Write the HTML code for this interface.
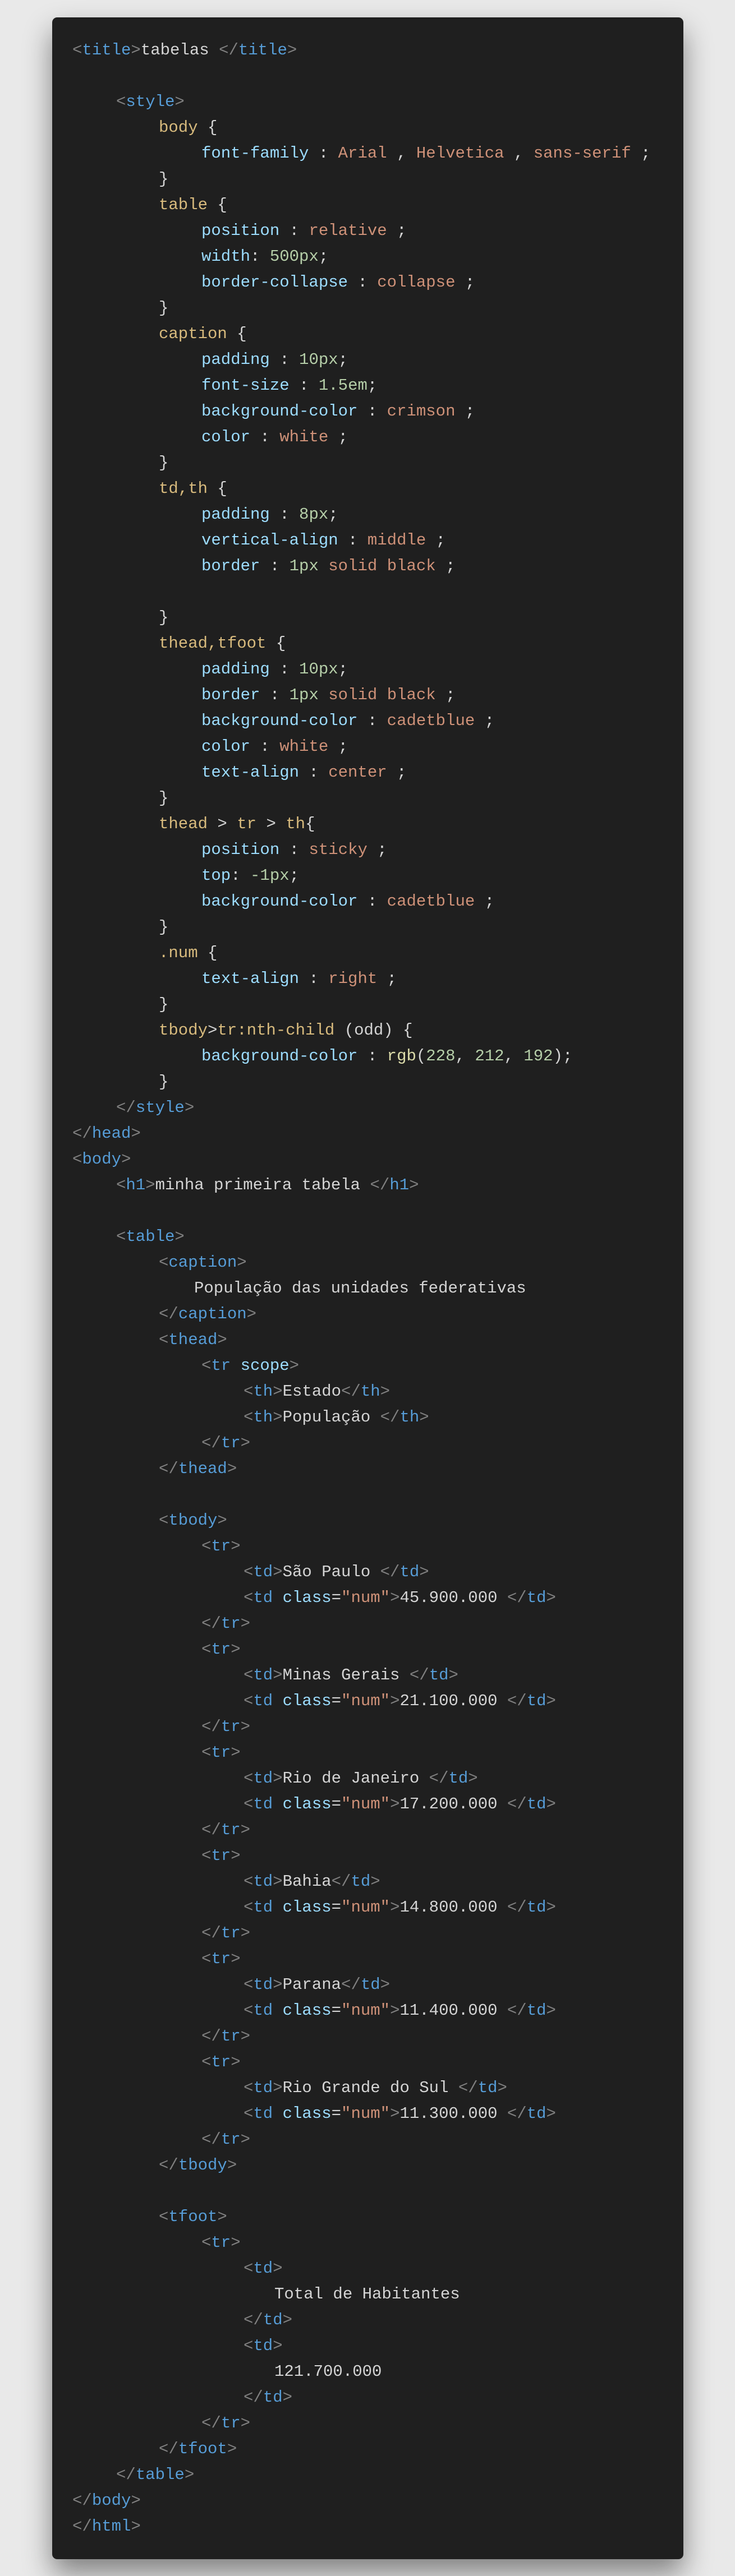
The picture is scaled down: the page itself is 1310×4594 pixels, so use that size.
<!DOCTYPE html>
<html><head><meta charset="utf-8"><style>
html,body{margin:0;padding:0;background:#e9e9e9;}
body{width:1310px;height:4594px;position:relative;overflow:hidden;}
.panel{position:absolute;left:93px;top:31px;width:1125px;height:4533px;background:#1f1f1f;border-radius:9px;box-shadow:0 25px 50px rgba(0,0,0,.45);}
.code{position:absolute;left:0;top:36px;}
.l{height:46px;line-height:46px;white-space:pre;font-family:"Liberation Mono",monospace;font-size:29px;color:#d4d4d4;}
.i0{padding-left:36px}.i1{padding-left:114px}.i2{padding-left:190px}.i3{padding-left:266px}.i4{padding-left:341px}
.i3m{padding-left:253px}.i4p{padding-left:396px}
.b{color:#808080}.t{color:#569cd6}.s{color:#d7ba7d}.p{color:#9cdcfe}.v{color:#ce9178}.n{color:#b5cea8}.f{color:#dcdcaa}
</style></head><body>
<div class="panel"><div class="code">
<div class="l i0"><span class="b">&lt;</span><span class="t">title</span><span class="b">&gt;</span>tabelas <span class="b">&lt;/</span><span class="t">title</span><span class="b">&gt;</span></div>
<div class="l"></div>
<div class="l i1"><span class="b">&lt;</span><span class="t">style</span><span class="b">&gt;</span></div>
<div class="l i2"><span class="s">body</span> {</div>
<div class="l i3"><span class="p">font-family</span> : <span class="v">Arial</span> , <span class="v">Helvetica</span> , <span class="v">sans-serif</span> ;</div>
<div class="l i2">}</div>
<div class="l i2"><span class="s">table</span> {</div>
<div class="l i3"><span class="p">position</span> : <span class="v">relative</span> ;</div>
<div class="l i3"><span class="p">width</span>: <span class="n">500px</span>;</div>
<div class="l i3"><span class="p">border-collapse</span> : <span class="v">collapse</span> ;</div>
<div class="l i2">}</div>
<div class="l i2"><span class="s">caption</span> {</div>
<div class="l i3"><span class="p">padding</span> : <span class="n">10px</span>;</div>
<div class="l i3"><span class="p">font-size</span> : <span class="n">1.5em</span>;</div>
<div class="l i3"><span class="p">background-color</span> : <span class="v">crimson</span> ;</div>
<div class="l i3"><span class="p">color</span> : <span class="v">white</span> ;</div>
<div class="l i2">}</div>
<div class="l i2"><span class="s">td,th</span> {</div>
<div class="l i3"><span class="p">padding</span> : <span class="n">8px</span>;</div>
<div class="l i3"><span class="p">vertical-align</span> : <span class="v">middle</span> ;</div>
<div class="l i3"><span class="p">border</span> : <span class="n">1px</span> <span class="v">solid</span> <span class="v">black</span> ;</div>
<div class="l"></div>
<div class="l i2">}</div>
<div class="l i2"><span class="s">thead,tfoot</span> {</div>
<div class="l i3"><span class="p">padding</span> : <span class="n">10px</span>;</div>
<div class="l i3"><span class="p">border</span> : <span class="n">1px</span> <span class="v">solid</span> <span class="v">black</span> ;</div>
<div class="l i3"><span class="p">background-color</span> : <span class="v">cadetblue</span> ;</div>
<div class="l i3"><span class="p">color</span> : <span class="v">white</span> ;</div>
<div class="l i3"><span class="p">text-align</span> : <span class="v">center</span> ;</div>
<div class="l i2">}</div>
<div class="l i2"><span class="s">thead</span> &gt; <span class="s">tr</span> &gt; <span class="s">th</span>{</div>
<div class="l i3"><span class="p">position</span> : <span class="v">sticky</span> ;</div>
<div class="l i3"><span class="p">top</span>: <span class="n">-1px</span>;</div>
<div class="l i3"><span class="p">background-color</span> : <span class="v">cadetblue</span> ;</div>
<div class="l i2">}</div>
<div class="l i2"><span class="s">.num</span> {</div>
<div class="l i3"><span class="p">text-align</span> : <span class="v">right</span> ;</div>
<div class="l i2">}</div>
<div class="l i2"><span class="s">tbody</span>&gt;<span class="s">tr:nth-child</span> (odd) {</div>
<div class="l i3"><span class="p">background-color</span> : <span class="f">rgb</span>(<span class="n">228</span>, <span class="n">212</span>, <span class="n">192</span>);</div>
<div class="l i2">}</div>
<div class="l i1"><span class="b">&lt;/</span><span class="t">style</span><span class="b">&gt;</span></div>
<div class="l i0"><span class="b">&lt;/</span><span class="t">head</span><span class="b">&gt;</span></div>
<div class="l i0"><span class="b">&lt;</span><span class="t">body</span><span class="b">&gt;</span></div>
<div class="l i1"><span class="b">&lt;</span><span class="t">h1</span><span class="b">&gt;</span>minha primeira tabela <span class="b">&lt;/</span><span class="t">h1</span><span class="b">&gt;</span></div>
<div class="l"></div>
<div class="l i1"><span class="b">&lt;</span><span class="t">table</span><span class="b">&gt;</span></div>
<div class="l i2"><span class="b">&lt;</span><span class="t">caption</span><span class="b">&gt;</span></div>
<div class="l i3m">População das unidades federativas</div>
<div class="l i2"><span class="b">&lt;/</span><span class="t">caption</span><span class="b">&gt;</span></div>
<div class="l i2"><span class="b">&lt;</span><span class="t">thead</span><span class="b">&gt;</span></div>
<div class="l i3"><span class="b">&lt;</span><span class="t">tr</span> <span class="p">scope</span><span class="b">&gt;</span></div>
<div class="l i4"><span class="b">&lt;</span><span class="t">th</span><span class="b">&gt;</span>Estado<span class="b">&lt;/</span><span class="t">th</span><span class="b">&gt;</span></div>
<div class="l i4"><span class="b">&lt;</span><span class="t">th</span><span class="b">&gt;</span>População <span class="b">&lt;/</span><span class="t">th</span><span class="b">&gt;</span></div>
<div class="l i3"><span class="b">&lt;/</span><span class="t">tr</span><span class="b">&gt;</span></div>
<div class="l i2"><span class="b">&lt;/</span><span class="t">thead</span><span class="b">&gt;</span></div>
<div class="l"></div>
<div class="l i2"><span class="b">&lt;</span><span class="t">tbody</span><span class="b">&gt;</span></div>
<div class="l i3"><span class="b">&lt;</span><span class="t">tr</span><span class="b">&gt;</span></div>
<div class="l i4"><span class="b">&lt;</span><span class="t">td</span><span class="b">&gt;</span>São Paulo <span class="b">&lt;/</span><span class="t">td</span><span class="b">&gt;</span></div>
<div class="l i4"><span class="b">&lt;</span><span class="t">td</span> <span class="p">class</span>=<span class="v">"num"</span><span class="b">&gt;</span>45.900.000 <span class="b">&lt;/</span><span class="t">td</span><span class="b">&gt;</span></div>
<div class="l i3"><span class="b">&lt;/</span><span class="t">tr</span><span class="b">&gt;</span></div>
<div class="l i3"><span class="b">&lt;</span><span class="t">tr</span><span class="b">&gt;</span></div>
<div class="l i4"><span class="b">&lt;</span><span class="t">td</span><span class="b">&gt;</span>Minas Gerais <span class="b">&lt;/</span><span class="t">td</span><span class="b">&gt;</span></div>
<div class="l i4"><span class="b">&lt;</span><span class="t">td</span> <span class="p">class</span>=<span class="v">"num"</span><span class="b">&gt;</span>21.100.000 <span class="b">&lt;/</span><span class="t">td</span><span class="b">&gt;</span></div>
<div class="l i3"><span class="b">&lt;/</span><span class="t">tr</span><span class="b">&gt;</span></div>
<div class="l i3"><span class="b">&lt;</span><span class="t">tr</span><span class="b">&gt;</span></div>
<div class="l i4"><span class="b">&lt;</span><span class="t">td</span><span class="b">&gt;</span>Rio de Janeiro <span class="b">&lt;/</span><span class="t">td</span><span class="b">&gt;</span></div>
<div class="l i4"><span class="b">&lt;</span><span class="t">td</span> <span class="p">class</span>=<span class="v">"num"</span><span class="b">&gt;</span>17.200.000 <span class="b">&lt;/</span><span class="t">td</span><span class="b">&gt;</span></div>
<div class="l i3"><span class="b">&lt;/</span><span class="t">tr</span><span class="b">&gt;</span></div>
<div class="l i3"><span class="b">&lt;</span><span class="t">tr</span><span class="b">&gt;</span></div>
<div class="l i4"><span class="b">&lt;</span><span class="t">td</span><span class="b">&gt;</span>Bahia<span class="b">&lt;/</span><span class="t">td</span><span class="b">&gt;</span></div>
<div class="l i4"><span class="b">&lt;</span><span class="t">td</span> <span class="p">class</span>=<span class="v">"num"</span><span class="b">&gt;</span>14.800.000 <span class="b">&lt;/</span><span class="t">td</span><span class="b">&gt;</span></div>
<div class="l i3"><span class="b">&lt;/</span><span class="t">tr</span><span class="b">&gt;</span></div>
<div class="l i3"><span class="b">&lt;</span><span class="t">tr</span><span class="b">&gt;</span></div>
<div class="l i4"><span class="b">&lt;</span><span class="t">td</span><span class="b">&gt;</span>Parana<span class="b">&lt;/</span><span class="t">td</span><span class="b">&gt;</span></div>
<div class="l i4"><span class="b">&lt;</span><span class="t">td</span> <span class="p">class</span>=<span class="v">"num"</span><span class="b">&gt;</span>11.400.000 <span class="b">&lt;/</span><span class="t">td</span><span class="b">&gt;</span></div>
<div class="l i3"><span class="b">&lt;/</span><span class="t">tr</span><span class="b">&gt;</span></div>
<div class="l i3"><span class="b">&lt;</span><span class="t">tr</span><span class="b">&gt;</span></div>
<div class="l i4"><span class="b">&lt;</span><span class="t">td</span><span class="b">&gt;</span>Rio Grande do Sul <span class="b">&lt;/</span><span class="t">td</span><span class="b">&gt;</span></div>
<div class="l i4"><span class="b">&lt;</span><span class="t">td</span> <span class="p">class</span>=<span class="v">"num"</span><span class="b">&gt;</span>11.300.000 <span class="b">&lt;/</span><span class="t">td</span><span class="b">&gt;</span></div>
<div class="l i3"><span class="b">&lt;/</span><span class="t">tr</span><span class="b">&gt;</span></div>
<div class="l i2"><span class="b">&lt;/</span><span class="t">tbody</span><span class="b">&gt;</span></div>
<div class="l"></div>
<div class="l i2"><span class="b">&lt;</span><span class="t">tfoot</span><span class="b">&gt;</span></div>
<div class="l i3"><span class="b">&lt;</span><span class="t">tr</span><span class="b">&gt;</span></div>
<div class="l i4"><span class="b">&lt;</span><span class="t">td</span><span class="b">&gt;</span></div>
<div class="l i4p">Total de Habitantes</div>
<div class="l i4"><span class="b">&lt;/</span><span class="t">td</span><span class="b">&gt;</span></div>
<div class="l i4"><span class="b">&lt;</span><span class="t">td</span><span class="b">&gt;</span></div>
<div class="l i4p">121.700.000</div>
<div class="l i4"><span class="b">&lt;/</span><span class="t">td</span><span class="b">&gt;</span></div>
<div class="l i3"><span class="b">&lt;/</span><span class="t">tr</span><span class="b">&gt;</span></div>
<div class="l i2"><span class="b">&lt;/</span><span class="t">tfoot</span><span class="b">&gt;</span></div>
<div class="l i1"><span class="b">&lt;/</span><span class="t">table</span><span class="b">&gt;</span></div>
<div class="l i0"><span class="b">&lt;/</span><span class="t">body</span><span class="b">&gt;</span></div>
<div class="l i0"><span class="b">&lt;/</span><span class="t">html</span><span class="b">&gt;</span></div>
</div></div>
</body></html>
